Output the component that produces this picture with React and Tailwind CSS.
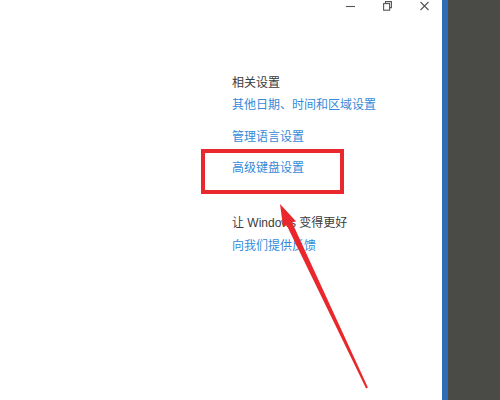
import React from "react";

export default function App() {
  return (
    <div className="w-[500px] h-[400px] flex bg-white overflow-hidden font-['Liberation_Sans','Noto_Sans_CJK_SC',sans-serif]">
      <div className="relative flex-1 flex flex-col">
        <div className="flex justify-end items-start gap-[28px] pr-[13px] pt-[1px] h-[12px]">
          <svg width="9" height="10" viewBox="0 0 9 10" className="text-[#555]">
            <line x1="0" y1="5.5" x2="9" y2="5.5" stroke="currentColor" strokeWidth="1.1" />
          </svg>
          <svg width="9" height="10" viewBox="0 0 9 10" className="text-[#555]">
            <rect x="0.6" y="2.6" width="6" height="6.6" fill="white" stroke="currentColor" strokeWidth="1.1" />
            <path d="M2.5 2.6 V0.6 H8.4 V6.6 H6.6" fill="none" stroke="currentColor" strokeWidth="1.1" />
          </svg>
          <svg width="9" height="10" viewBox="0 0 9 10" className="text-[#555]">
            <path d="M0.5 1 L8.5 9 M8.5 1 L0.5 9" stroke="currentColor" strokeWidth="1.1" />
          </svg>
        </div>
        <div className="flex flex-col pl-[232px] pt-[63px] text-[12px] leading-4">
          <div className="text-[#3a3a3a]">相关设置</div>
          <div className="mt-[6px] text-[#348ad9]">其他日期、时间和区域设置</div>
          <div className="mt-[16px] text-[#348ad9]">管理语言设置</div>
          <div className="mt-[15px] text-[#348ad9]">高级键盘设置</div>
          <div className="mt-[39px] text-[#3a3a3a]">让 Windows 变得更好</div>
          <div className="mt-[7px] text-[#348ad9]">向我们提供反馈</div>
        </div>
        <div className="absolute left-[201px] top-[149px] w-[143px] h-[45px] border-4 border-[#e8282c]" />
        <svg className="absolute left-0 top-0 pointer-events-none" width="442" height="400" viewBox="0 0 442 400">
          <polygon
            points="280,204 295.7,220.9 292.1,222.6 367.9,387.6 366.1,388.4 286.7,225.2 283.1,226.9"
            fill="#e8282c"
          />
        </svg>
      </div>
      <div className="w-[6px] bg-[#2d6db5]" />
      <div className="w-[52px] bg-[#4a4a47]" />
    </div>
  );
}
